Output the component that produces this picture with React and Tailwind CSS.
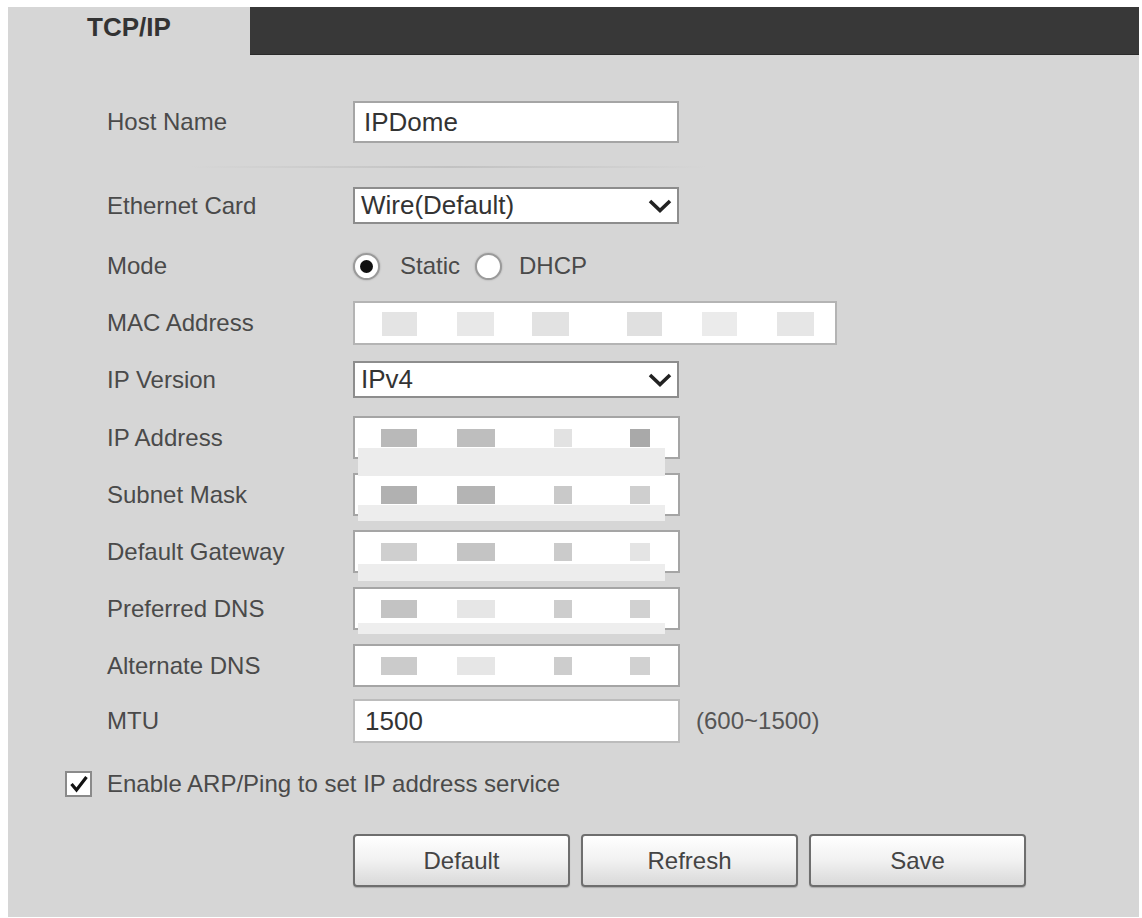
import React, { useState } from "react";

const FONT = { fontFamily: '"Liberation Sans", Arial, sans-serif' };

// pixelated (masked) blocks inside the address fields
const ipMasks = [
  ["#b9b9b9", "#bebebe", "#e2e2e2", "#a9a9a9"],
  ["#b1b1b1", "#b4b4b4", "#c9c9c9", "#cfcfcf"],
  ["#cfcfcf", "#c4c4c4", "#cbcbcb", "#e4e4e4"],
  ["#c3c3c3", "#e6e6e6", "#cdcdcd", "#d1d1d1"],
  ["#cbcbcb", "#e6e6e6", "#cdcdcd", "#d1d1d1"],
];
const ipBlockX = [
  [26, 36],
  [102, 38],
  [199, 18],
  [275, 20],
];
const macBlocks = [
  [27, 35, "#e4e4e4"],
  [102, 37, "#e8e8e8"],
  [177, 37, "#e2e2e2"],
  [272, 35, "#e0e0e0"],
  [347, 35, "#ebebeb"],
  [422, 37, "#e6e6e6"],
];

const ipRows = ["IP Address", "Subnet Mask", "Default Gateway", "Preferred DNS", "Alternate DNS"];

function Label({ children }) {
  return <div className="w-[246px] shrink-0 text-[24px] text-[#4a4a4a]">{children}</div>;
}

function Chevron() {
  return (
    <svg width="24" height="14" viewBox="0 0 24 14" className="absolute right-[5px] top-1/2 -translate-y-1/2">
      <polyline points="2,2 12,11.5 22,2" fill="none" stroke="#222" strokeWidth="3.6" strokeLinejoin="miter" />
    </svg>
  );
}

function Select({ value }) {
  return (
    <div className="relative flex h-full w-[326px] items-center border-2 border-[#8d8d8d] bg-white pl-[6px] text-[26px] text-[#333]">
      {value}
      <Chevron />
    </div>
  );
}

function Radio({ checked }) {
  return (
    <span className="flex h-[27px] w-[27px] items-center justify-center rounded-full border-2 border-[#9a9a9a] bg-white shadow-[0_0_2px_rgba(0,0,0,0.25)]">
      {checked && <span className="h-[13px] w-[13px] rounded-full bg-[#111]" />}
    </span>
  );
}

function Btn({ children }) {
  return (
    <button className="h-[53px] w-[217px] rounded-[4px] border-2 border-[#6e6e6e] bg-gradient-to-b from-[#ffffff] via-[#f1f1f1] to-[#d9d9d9] text-[24px] text-[#444] shadow-[0_1px_1px_rgba(0,0,0,0.2)]">
      {children}
    </button>
  );
}

export default function App() {
  const [mode, setMode] = useState("static");
  const [arp, setArp] = useState(true);

  return (
    <div className="min-h-[918px] bg-white pl-[8px] pt-[7px]" style={FONT}>
      <div className="flex h-[910px] w-[1131px] flex-col bg-[#d6d6d6]">
        {/* tab bar */}
        <div className="flex h-[48px] shrink-0">
          <div className="w-[242px] pt-[5px] text-center text-[26px] font-bold leading-[30px] text-[#333]">TCP/IP</div>
          <div className="flex-1 border-b border-[#2a2a2a] bg-[#383838]" />
        </div>

        <div className="flex flex-col pl-[99px]">
          <div className="mt-[46px] flex h-[42px] items-center">
            <Label>Host Name</Label>
            <input
              defaultValue="IPDome"
              className="h-full w-[326px] border-2 border-[#a5a5a5] bg-white pl-[9px] text-[26px] text-[#333] outline-none"
            />
          </div>

          <div className="ml-[83px] mt-[23px] h-[2px] w-[517px] bg-gradient-to-r from-transparent via-[#c2c2c2] to-transparent" />

          <div className="mt-[19px] flex h-[37px] items-center">
            <Label>Ethernet Card</Label>
            <Select value="Wire(Default)" />
          </div>

          <div className="mt-[27px] flex h-[30px] items-center">
            <Label>Mode</Label>
            <div className="flex items-center text-[24px] text-[#4a4a4a]">
              <button className="flex items-center" onClick={() => setMode("static")}>
                <Radio checked={mode === "static"} />
                <span className="ml-[20px]">Static</span>
              </button>
              <button className="ml-[15px] flex items-center" onClick={() => setMode("dhcp")}>
                <Radio checked={mode === "dhcp"} />
                <span className="ml-[17px]">DHCP</span>
              </button>
            </div>
          </div>

          <div className="mt-[20px] flex h-[44px] items-center">
            <Label>MAC Address</Label>
            <div className="relative h-full w-[484px] border-2 border-[#b4b4b4] bg-white">
              {macBlocks.map(([l, w, c]) => (
                <span key={l} className="absolute top-[9px] h-[24px]" style={{ left: l, width: w, background: c }} />
              ))}
            </div>
          </div>

          <div className="mt-[16px] flex h-[37px] items-center">
            <Label>IP Version</Label>
            <Select value="IPv4" />
          </div>

          <div className="relative mt-[18px] flex flex-col gap-[14px]">
            {ipRows.map((name, i) => (
              <div key={name} className="flex h-[43px] items-center">
                <Label>{name}</Label>
                <div className="relative h-full w-[327px] border-2 border-[#a5a5a5] bg-white">
                  {ipBlockX.map(([l, w], j) => (
                    <span
                      key={j}
                      className="absolute top-[11px] h-[18px]"
                      style={{ left: l, width: w, background: ipMasks[i][j] }}
                    />
                  ))}
                </div>
              </div>
            ))}
            {/* mosaic bands laid over the masked fields */}
            <span className="absolute left-[251px] top-[32px] h-[28px] w-[307px] bg-[#ececec]" />
            <span className="absolute left-[251px] top-[89px] h-[16px] w-[307px] bg-[#ededed]" />
            <span className="absolute left-[251px] top-[148px] h-[17px] w-[307px] bg-[#ededed]" />
            <span className="absolute left-[251px] top-[207px] h-[11px] w-[307px] bg-[#eeeeee]" />
          </div>

          <div className="mt-[12px] flex h-[44px] items-center">
            <Label>MTU</Label>
            <input
              defaultValue="1500"
              className="h-full w-[327px] border-2 border-[#bcbcbc] bg-white pl-[10px] text-[26px] text-[#333] outline-none"
            />
            <span className="ml-[16px] text-[24px] text-[#555]">(600~1500)</span>
          </div>
        </div>

        <button className="ml-[57px] mt-[28px] flex h-[26px] items-center self-start" onClick={() => setArp(!arp)}>
          <span className="flex h-[26px] w-[27px] items-center justify-center border-2 border-[#8a8a8a] bg-white">
            {arp && (
              <svg width="20" height="18" viewBox="0 0 20 18">
                <polyline points="2.5,9 7.5,15 17.5,2" fill="none" stroke="#111" strokeWidth="3.2" />
              </svg>
            )}
          </span>
          <span className="ml-[15px] text-[24px] text-[#4a4a4a]">Enable ARP/Ping to set IP address service</span>
        </button>

        <div className="ml-[345px] mt-[37px] flex gap-[11px]">
          <Btn>Default</Btn>
          <Btn>Refresh</Btn>
          <Btn>Save</Btn>
        </div>
      </div>
    </div>
  );
}
